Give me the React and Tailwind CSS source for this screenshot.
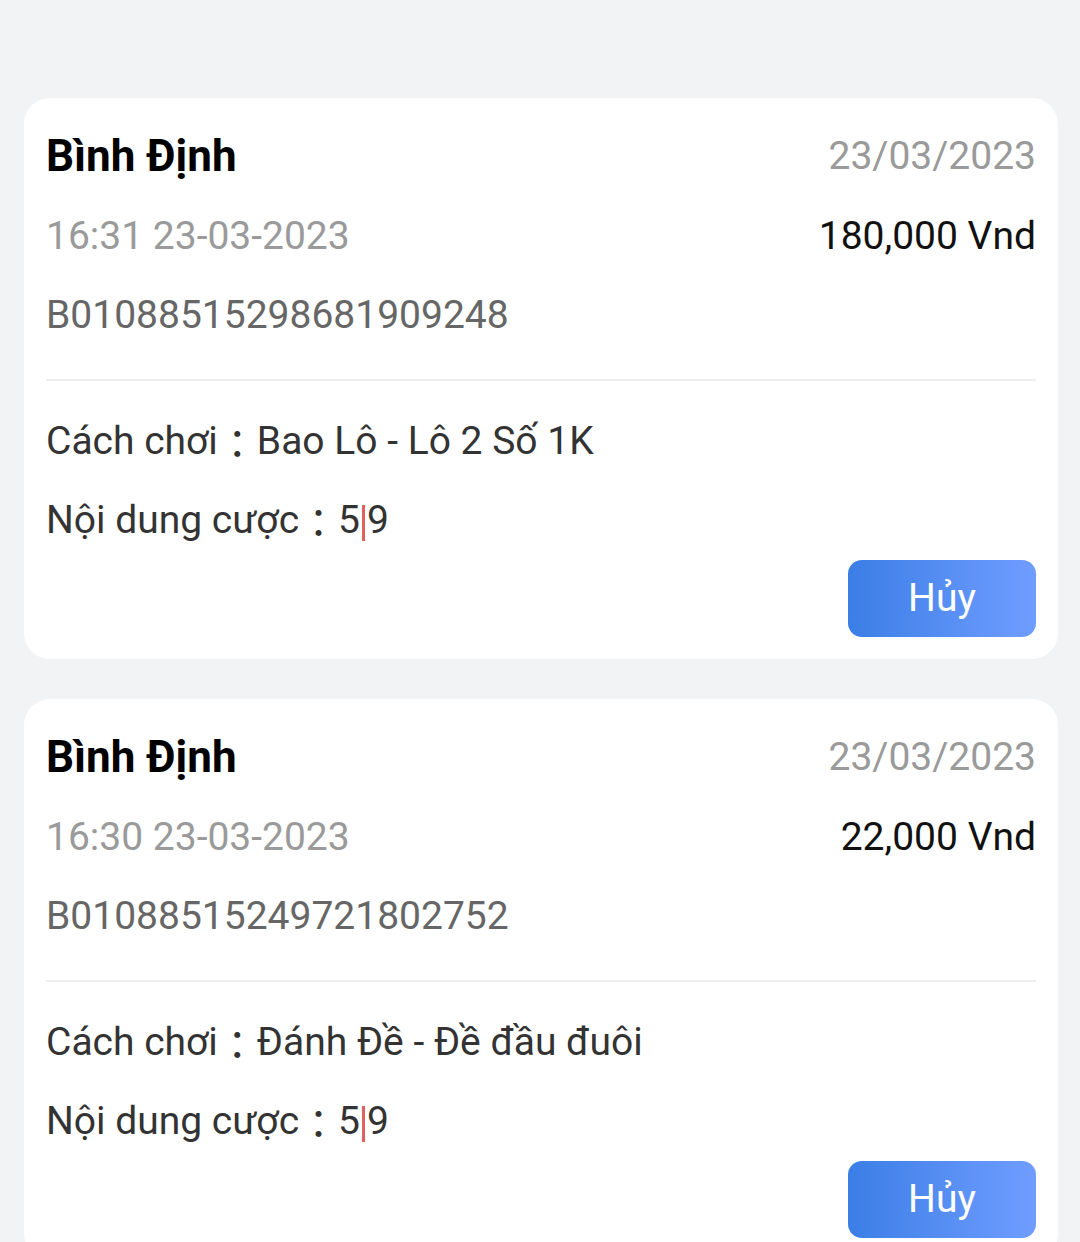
import React from 'react';

const orders = [
    {
        id: 1,
        province: 'Bình Định',
        day: '23/03/2023',
        time: '16:31 23-03-2023',
        amount: '180,000 Vnd',
        code: 'B01088515298681909248',
        play: 'Bao Lô - Lô 2 Số 1K',
    },
    {
        id: 2,
        province: 'Bình Định',
        day: '23/03/2023',
        time: '16:30 23-03-2023',
        amount: '22,000 Vnd',
        code: 'B01088515249721802752',
        play: 'Đánh Đề - Đề đầu đuôi',
    },
];

// full width colon, centred in the JP face
const Colon = () => (
    <span style={{ fontFamily: '"Noto Sans CJK JP", sans-serif' }}>：</span>
);

function OrderCard({ order }) {
    return (
        <div className="bg-white rounded-[26px] px-[22px] pt-[18px] pb-[22px]">
            <div className="flex items-center justify-between h-[80px]">
                <span className="text-[44px] font-bold text-black leading-none">{order.province}</span>
                <span className="text-[39px] text-[#9a9a9a] leading-none">{order.day}</span>
            </div>
            <div className="flex items-center justify-between h-[80px]">
                <span className="text-[39px] text-[#9a9a9a] leading-none">{order.time}</span>
                <span className="text-[39px] text-[#111] leading-none">{order.amount}</span>
            </div>
            <div className="flex items-center h-[79px]">
                <span className="text-[39px] text-[#666] leading-none">{order.code}</span>
            </div>
            <div className="mt-[24px] h-[2px] bg-[#eeeeee]" />
            <div className="mt-[20px] flex items-center h-[80px] text-[39px] text-[#333] leading-none">
                Cách chơi<Colon />{order.play}
            </div>
            <div className="flex items-center h-[79px] text-[39px] text-[#333] leading-none">
                Nội dung cược<Colon />5<span className="inline-block w-[3px] h-[36px] bg-[#e06060] mx-[2px] mt-[4px]" />9
            </div>
            <div className="flex justify-end">
                <button
                    type="button"
                    className="w-[188px] h-[77px] rounded-[14px] bg-gradient-to-r from-[#3a7ee6] to-[#6f9dff] text-white text-[39px] leading-none"
                >
                    Hủy
                </button>
            </div>
        </div>
    );
}

export default function App() {
    return (
        <div
            className="min-h-[1242px] bg-[#f2f3f5] pl-[24px] pr-[22px] pt-[98px] flex flex-col gap-[40px]"
            style={{ fontFamily: 'Roboto, "Noto Sans CJK SC", sans-serif' }}
        >
            {orders.map((order) => (
                <OrderCard key={order.id} order={order} />
            ))}
        </div>
    );
}
